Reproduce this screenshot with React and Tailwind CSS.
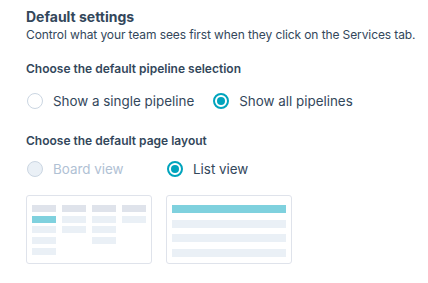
function Radio({ label, checked, disabled, className = '' }) {
  return (
    <label className={`flex items-center gap-[10px] ${className}`}>
      {checked ? (
        <span className="flex h-[16px] w-[16px] items-center justify-center rounded-full border-2 border-[#00a4bd] bg-white">
          <span className="h-[8px] w-[8px] rounded-full bg-[#00a4bd]" />
        </span>
      ) : (
        <span
          className={`h-[16px] w-[16px] rounded-full border ${
            disabled ? 'border-[#cbd6e2] bg-[#eaf0f6]' : 'border-[#cbd6e2] bg-white'
          }`}
        />
      )}
      <span className={`text-[13.4px] leading-[20px] ${disabled ? 'text-[#b0c1d4]' : 'text-[#33475b]'}`}>{label}</span>
    </label>
  );
}

function BoardPreview() {
  const cols = [4, 2, 3, 1];
  return (
    <div className="flex h-[69px] w-[126px] gap-[6px] rounded-[3px] border border-[#dfe3eb] bg-white px-[5px] pt-[9px]">
      {cols.map((n, i) => (
        <div key={i} className="flex w-[24px] flex-col gap-[3.7px]">
          <div className="h-[7px] bg-[#dfe3eb]" />
          {Array.from({ length: n }).map((_, j) => (
            <div key={j} className={`h-[7px] ${i === 0 && j === 0 ? 'bg-[#7fd1de]' : 'bg-[#eaf0f6]'}`} />
          ))}
        </div>
      ))}
    </div>
  );
}

function ListPreview() {
  return (
    <div className="flex h-[69px] w-[126px] flex-col gap-[6.5px] rounded-[3px] border border-[#dfe3eb] bg-white px-[5px] pt-[9px]">
      <div className="h-[8px] bg-[#7fd1de]" />
      <div className="h-[8px] bg-[#eaf0f6]" />
      <div className="h-[8px] bg-[#eaf0f6]" />
      <div className="h-[8px] bg-[#eaf0f6]" />
    </div>
  );
}

export default function App() {
  return (
    <div className="min-h-screen bg-white px-[26px] pt-[8px] text-[#33475b]" style={{ fontFamily: 'Inter, "Noto Sans", sans-serif' }}>
      <h2 className="text-[14px] font-bold leading-[18px]">Default settings</h2>
      <p className="mt-[1px] whitespace-nowrap text-[12px] leading-[16px] tracking-[-0.1px]">
        Control what your team sees first when they click on the Services tab.
      </p>

      <h3 className="mt-[18px] text-[12px] font-semibold leading-[16px]">Choose the default pipeline selection</h3>
      <div className="mt-[14px] flex h-[20px] items-center gap-[19px] pl-[1px]">
        <Radio label="Show a single pipeline" />
        <Radio label="Show all pipelines" checked />
      </div>

      <h3 className="mt-[22px] text-[12px] font-semibold leading-[16px]">Choose the default page layout</h3>
      <div className="mt-[10px] flex h-[20px] items-center gap-[14px] pl-[1px]">
        <Radio label="Board view" disabled className="w-[126px]" />
        <Radio label="List view" checked className="w-[126px]" />
      </div>

      <div className="mt-[16px] flex gap-[14px]">
        <BoardPreview />
        <ListPreview />
      </div>
    </div>
  );
}
